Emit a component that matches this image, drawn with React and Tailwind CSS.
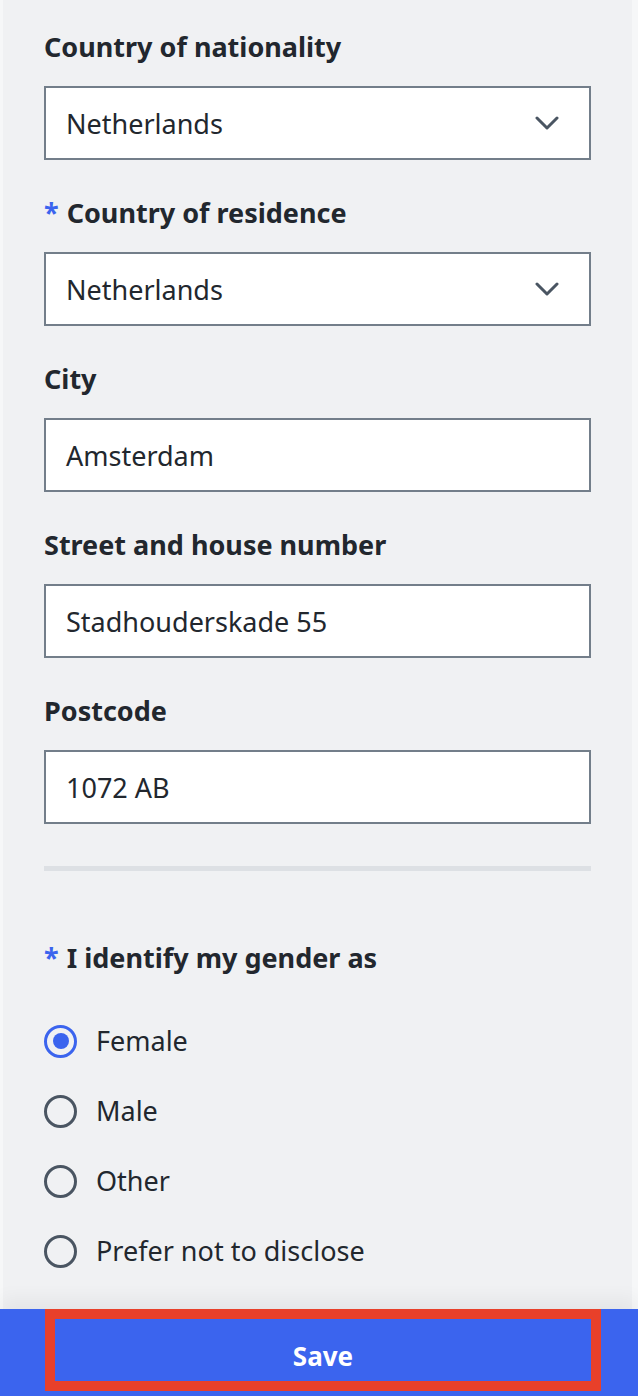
import { useState } from 'react';

const fields = [
    { id: 'nationality', label: 'Country of nationality', value: 'Netherlands', select: true },
    { id: 'residence', label: 'Country of residence', value: 'Netherlands', select: true, required: true },
    { id: 'city', label: 'City', value: 'Amsterdam' },
    { id: 'street', label: 'Street and house number', value: 'Stadhouderskade 55' },
    { id: 'postcode', label: 'Postcode', value: '1072 AB' }
];

const genders = ['Female', 'Male', 'Other', 'Prefer not to disclose'];

function Chevron() {
    return (
        <svg width="24" height="14" viewBox="0 0 24 14" fill="none">
            <path d="M2 2l10 10L22 2" stroke="#4a5562" strokeWidth="3" strokeLinecap="round" strokeLinejoin="round" />
        </svg>
    );
}

export default function App() {
    const [gender, setGender] = useState('Female');

    return (
        <div className="min-h-[1396px] bg-[#f6f7f8] font-['Noto_Sans',sans-serif] text-[#22272e] flex flex-col">
            <div className="flex-1 flex flex-col ml-[3px] mr-[6px] bg-[#f0f1f3] pl-[41px] pr-[41px] pt-[31px]">
                {fields.map(field => (
                    <div key={field.id} className="mb-[37px]">
                        <label className="block text-[27px] leading-[32px] font-bold">
                            {field.required && <span className="text-[#3b64ee] mr-[8px]">*</span>}
                            {field.label}
                        </label>
                        <div className="mt-[23px] h-[74px] bg-white border-2 border-[#737e8a] flex items-center justify-between pl-[20px] pr-[30px]">
                            <span className="text-[27px] leading-none">{field.value}</span>
                            {field.select && <Chevron />}
                        </div>
                    </div>
                ))}

                <div className="mt-[5px] h-[5px] bg-[#dde0e4]" />

                <div className="mt-[71px] text-[27px] leading-[32px] font-bold">
                    <span className="text-[#3b64ee] mr-[8px]">*</span>
                    I identify my gender as
                </div>

                <div className="mt-[32px]">
                    {genders.map(g => (
                        <div
                            key={g}
                            onClick={() => setGender(g)}
                            className="h-[70px] flex items-center cursor-pointer"
                        >
                            {gender === g ? (
                                <span className="w-[33px] h-[33px] rounded-full border-[3px] border-[#3b64ee] flex items-center justify-center">
                                    <span className="w-[16px] h-[16px] rounded-full bg-[#3b64ee]" />
                                </span>
                            ) : (
                                <span className="w-[33px] h-[33px] rounded-full border-[3px] border-[#4a5562]" />
                            )}
                            <span className="ml-[19px] text-[27px]">{g}</span>
                        </div>
                    ))}
                </div>
            </div>

            <div className="h-[87px] bg-[#3b64ee] shadow-[0_-10px_18px_rgba(0,0,0,0.05)]">
                <button className="ml-[45px] w-[556px] h-[82px] border-[10px] border-[#e8402a] bg-[#3b64ee] text-white text-[26px] font-bold flex items-center justify-center pt-[12px]">
                    Save
                </button>
            </div>
        </div>
    );
}
